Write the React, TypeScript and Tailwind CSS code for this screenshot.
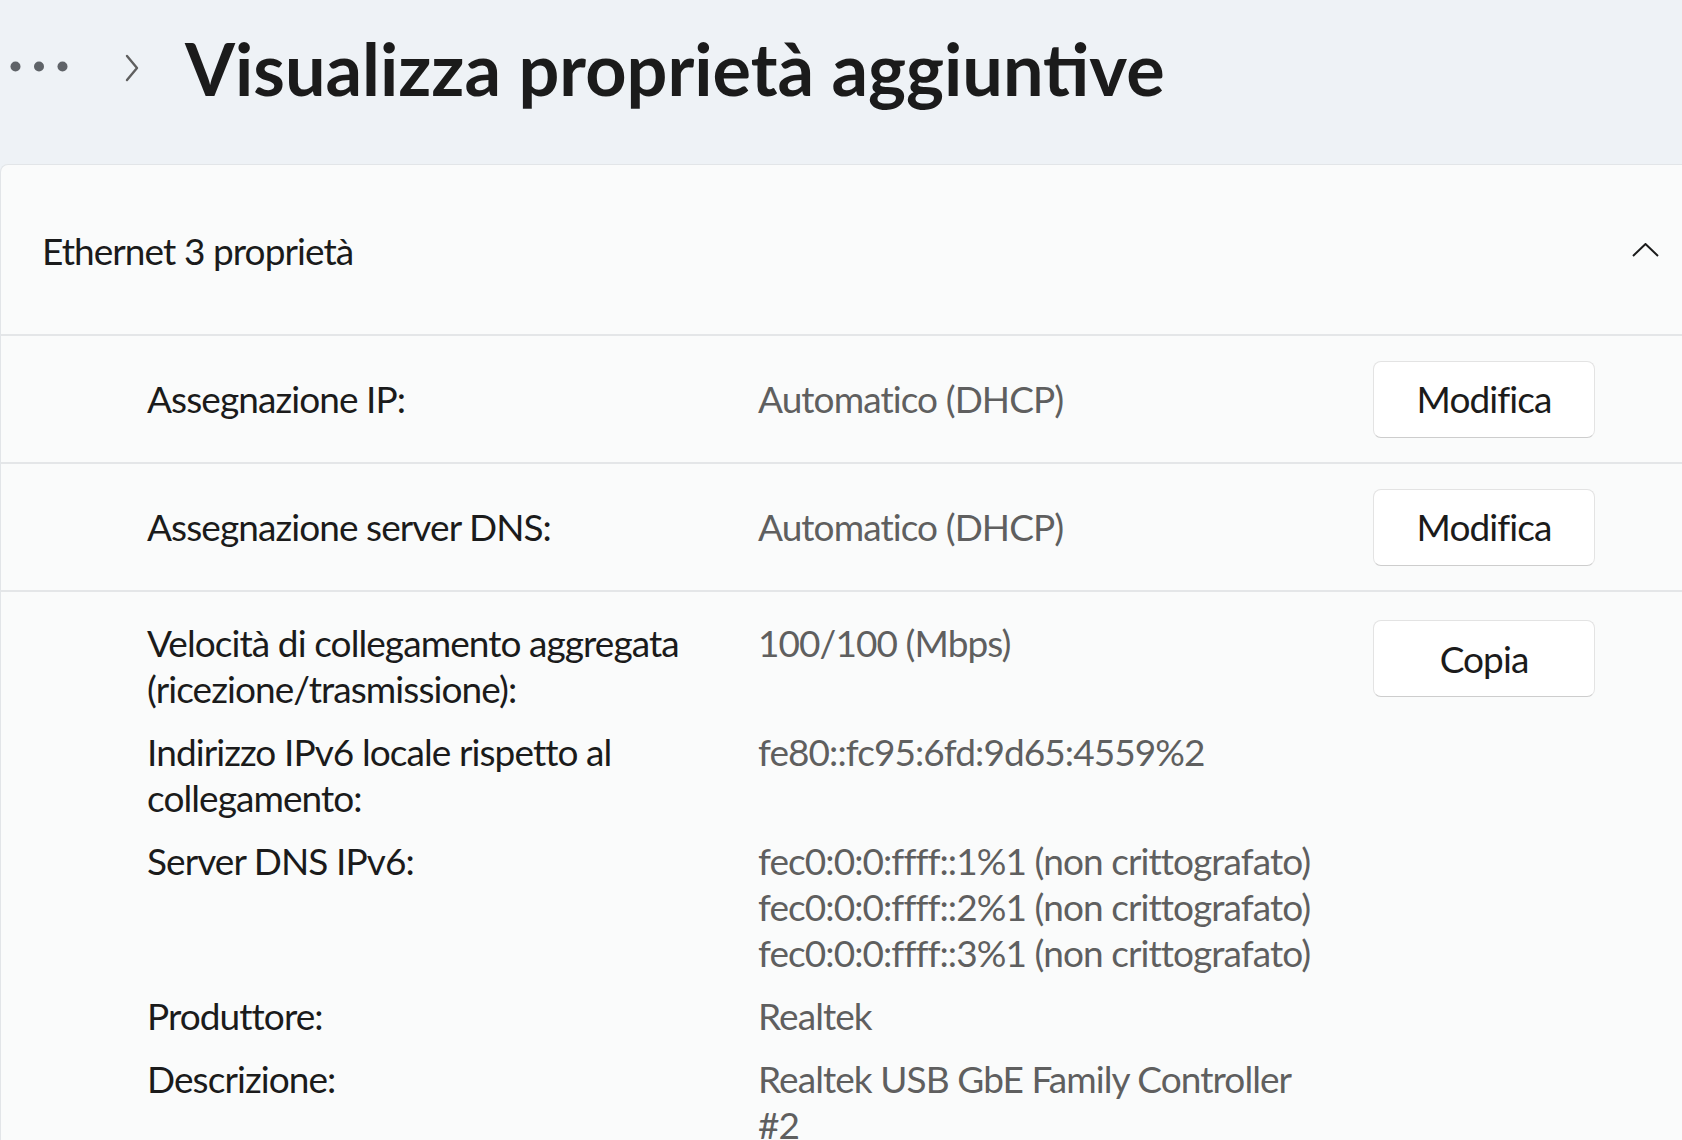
import type { ReactNode } from "react";

type Detail = {
  label: string;
  values: string[];
};

const details: Detail[] = [
  {
    label: "Velocità di collegamento aggregata (ricezione/trasmissione):",
    values: ["100/100 (Mbps)"],
  },
  {
    label: "Indirizzo IPv6 locale rispetto al collegamento:",
    values: ["fe80::fc95:6fd:9d65:4559%2"],
  },
  {
    label: "Server DNS IPv6:",
    values: [
      "fec0:0:0:ffff::1%1 (non crittografato)",
      "fec0:0:0:ffff::2%1 (non crittografato)",
      "fec0:0:0:ffff::3%1 (non crittografato)",
    ],
  },
  { label: "Produttore:", values: ["Realtek"] },
  { label: "Descrizione:", values: ["Realtek USB GbE Family Controller #2"] },
];

function ActionButton({ children }: { children: ReactNode }) {
  return (
    <button
      type="button"
      className="h-[77px] w-[222px] rounded-[8px] border border-[#e3e3e3] border-b-[#cdcdcd] bg-white text-[37px] leading-[46px] tracking-[-0.025em] text-[#1b1b1b]"
    >
      {children}
    </button>
  );
}

function SettingRow({ label, value }: { label: string; value: string }) {
  return (
    <div className="grid h-[128px] grid-cols-[611px_615px_222px] items-center border-b-2 border-[#e4e6e8] pl-[146px]">
      <span className="text-[#1b1b1b]">{label}</span>
      <span className="text-[#5f5f5f]">{value}</span>
      <ActionButton>Modifica</ActionButton>
    </div>
  );
}

export default function App() {
  return (
    <div className="h-[1140px] w-[1682px] overflow-hidden bg-[#eef2f6] font-['Lato',sans-serif] text-[37px] leading-[46px] tracking-[-0.025em]">
      <header className="flex h-[164px] items-center pb-[28px] pl-[10px]">
        <svg width="58" height="11" viewBox="0 0 58 11" className="mt-[-4px]">
          <circle cx="5.5" cy="5.5" r="5" fill="#5f6368" />
          <circle cx="29" cy="5.5" r="5" fill="#5f6368" />
          <circle cx="52.5" cy="5.5" r="5" fill="#5f6368" />
        </svg>
        <svg
          width="14"
          height="28"
          viewBox="0 0 14 28"
          className="ml-[57px]"
          fill="none"
          stroke="#5f5f5f"
          strokeWidth="2.4"
          strokeLinecap="round"
          strokeLinejoin="round"
        >
          <path d="M2 2 L12 14 L2 26" />
        </svg>
        <h1 className="ml-[46px] text-[72px] font-bold leading-[72px] tracking-normal text-[#1b1b1b]">
          Visualizza proprietà aggiuntive
        </h1>
      </header>

      <section className="rounded-tl-[8px] border-t border-l border-[#e2e5e8] bg-[#fafbfb]">
        <div className="flex h-[171px] items-center justify-between border-b-2 border-[#e4e6e8] pr-[23px] pl-[41px]">
          <span className="mt-[3px] text-[#1b1b1b]">Ethernet 3 proprietà</span>
          <svg
            width="27"
            height="14"
            viewBox="0 0 27 14"
            fill="none"
            stroke="#1b1b1b"
            strokeWidth="2"
          >
            <path d="M1 13 L13.5 1 L26 13" />
          </svg>
        </div>

        <SettingRow label="Assegnazione IP:" value="Automatico (DHCP)" />
        <SettingRow label="Assegnazione server DNS:" value="Automatico (DHCP)" />

        <div className="flex items-start pt-[28px] pl-[146px]">
          <dl className="grid w-[1226px] grid-cols-[611px_615px] gap-y-[17px]">
            {details.map((item) => (
              <div key={item.label} className="contents">
                <dt className="max-w-[590px] text-[#1b1b1b]">{item.label}</dt>
                <dd className="max-w-[565px] text-[#5f5f5f]">
                  {item.values.map((v) => (
                    <div key={v}>{v}</div>
                  ))}
                </dd>
              </div>
            ))}
          </dl>
          <ActionButton>Copia</ActionButton>
        </div>
      </section>
    </div>
  );
}
